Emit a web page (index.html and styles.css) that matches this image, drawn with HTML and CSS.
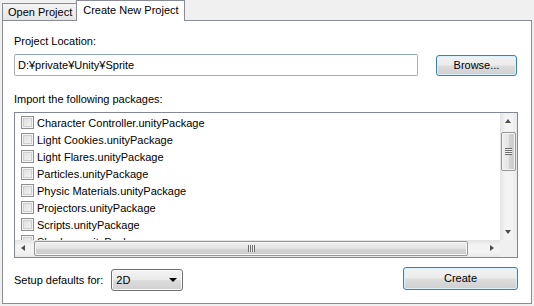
FILE: index.html
```html
<!DOCTYPE html>
<html>
<head>
<meta charset="utf-8">
<link rel="stylesheet" href="styles.css">
</head>
<body>
<div class="window">
  <div class="tabs">
    <div class="tab">Open Project</div>
    <div class="tab active">Create New Project</div>
  </div>
  <div class="panel">
    <div class="label">Project Location:</div>
    <div class="loc-row">
      <div class="input">D:¥private¥Unity¥Sprite</div>
      <div class="btn browse">Browse...</div>
    </div>
    <div class="label label2">Import the following packages:</div>
    <div class="list">
      <div class="items">
        <div class="item"><span class="cb"></span>Character Controller.unityPackage</div>
        <div class="item"><span class="cb"></span>Light Cookies.unityPackage</div>
        <div class="item"><span class="cb"></span>Light Flares.unityPackage</div>
        <div class="item"><span class="cb"></span>Particles.unityPackage</div>
        <div class="item"><span class="cb"></span>Physic Materials.unityPackage</div>
        <div class="item"><span class="cb"></span>Projectors.unityPackage</div>
        <div class="item"><span class="cb"></span>Scripts.unityPackage</div>
        <div class="item"><span class="cb"></span>Shaders.unityPackage</div>
      </div>
      <div class="vscroll">
        <div class="arrow up"></div>
        <div class="vthumb"><span class="grip-h"></span></div>
        <div class="vspace"></div>
        <div class="arrow down"></div>
      </div>
      <div class="hscroll">
        <div class="arrow left"></div>
        <div class="hthumb"><span class="grip-v"></span></div>
        <div class="arrow right"></div>
      </div>
      <div class="corner"></div>
    </div>
    <div class="bottom-row">
      <div class="setup">
        <span>Setup defaults for:</span>
        <div class="select"><span>2D</span><span class="caret"></span></div>
      </div>
      <div class="btn create">Create</div>
    </div>
  </div>
</div>
</body>
</html>
```
FILE: styles.css
```css
html, body {
  margin: 0;
  padding: 0;
}
body {
  background: #f0f0f0;
  font-family: "Liberation Sans", Arial, sans-serif;
  font-size: 11px;
  color: #000;
  width: 534px;
  height: 306px;
  overflow: hidden;
}
.window {
  padding: 0 2px 0 2px;
}
.tabs {
  display: flex;
  align-items: flex-end;
  height: 20px;
}
.tab {
  height: 17px;
  line-height: 17px;
  padding: 0 4px 0 5px;
  border: 1px solid #898c95;
  border-bottom: none;
  background: linear-gradient(#f3f3f3, #e6e6e6);
  box-sizing: border-box;
}
.tab.active {
  height: 21px;
  line-height: 19px;
  margin-bottom: -1px;
  margin-left: -1px;
  padding: 0 5px 0 6px;
  background: #fff;
  position: relative;
  z-index: 1;
}
.panel {
  border: 1px solid #898c95;
  background: #fff;
  height: 284px;
  width: 530px;
  box-sizing: border-box;
  padding: 13px 13px 0 11px;
}
.label {
  height: 14px;
  line-height: 14px;
}
.loc-row {
  display: flex;
  align-items: center;
  margin-top: 6px;
}
.input {
  width: 404px;
  height: 22px;
  box-sizing: border-box;
  border: 1px solid #abadb3;
  border-top-color: #8ea4c1;
  border-radius: 2px;
  line-height: 20px;
  padding-left: 3px;
}
.btn {
  box-sizing: border-box;
  border: 1px solid #3c7fb1;
  border-radius: 3px;
  background: linear-gradient(#f2f2f2 0%, #ebebeb 48%, #dddddd 52%, #cfcfcf 100%);
  box-shadow: inset 0 0 0 1px #d9f2fd;
  text-align: center;
}
.browse {
  width: 81px;
  height: 21px;
  line-height: 19px;
  margin-left: 18px;
}
.label2 {
  margin-top: 16px;
}
.list {
  margin-top: 6px;
  width: 504px;
  height: 146px;
  box-sizing: border-box;
  border: 1px solid #828790;
  display: grid;
  grid-template-columns: 1fr 17px;
  grid-template-rows: 1fr 17px;
}
.items {
  overflow: hidden;
  padding: 1px 0 0 6px;
}
.item {
  height: 17px;
  display: flex;
  align-items: center;
  white-space: nowrap;
}
.cb {
  width: 13px;
  height: 13px;
  box-sizing: border-box;
  border: 1px solid #8e8f8f;
  background: linear-gradient(135deg, #dcdcdc, #f6f6f6);
  box-shadow: inset 0 0 0 1px #f4f4f4, inset 0 0 0 2px #cfcfcf;
  margin-right: 3px;
  flex: none;
}
.vscroll {
  background: linear-gradient(90deg, #e3e3e3, #f3f3f3 30%, #f3f3f3 70%, #e8e8e8);
  display: flex;
  flex-direction: column;
  align-items: center;
}
.arrow {
  width: 17px;
  height: 17px;
  flex: none;
  position: relative;
}
.arrow::after {
  content: "";
  position: absolute;
  width: 0;
  height: 0;
}
.arrow.up::after {
  left: 5px;
  top: 6px;
  border-left: 3px solid transparent;
  border-right: 3px solid transparent;
  border-bottom: 4px solid #4d4d4d;
}
.arrow.down::after {
  left: 5px;
  top: 7px;
  border-left: 3px solid transparent;
  border-right: 3px solid transparent;
  border-top: 4px solid #4d4d4d;
}
.arrow.left::after {
  left: 6px;
  top: 5px;
  border-top: 3px solid transparent;
  border-bottom: 3px solid transparent;
  border-right: 4px solid #4d4d4d;
}
.arrow.right::after {
  left: 7px;
  top: 5px;
  border-top: 3px solid transparent;
  border-bottom: 3px solid transparent;
  border-left: 4px solid #4d4d4d;
}
.vthumb {
  width: 15px;
  height: 39px;
  box-sizing: border-box;
  margin-top: 2px;
  border: 1px solid #979797;
  border-radius: 2px;
  background: linear-gradient(90deg, #f0f0f0, #e4e4e4 50%, #d4d4d4 52%, #cacaca);
  box-shadow: inset 0 0 0 1px #f6f6f6;
  display: flex;
  align-items: center;
  justify-content: center;
}
.grip-h {
  width: 7px;
  height: 7px;
  background: repeating-linear-gradient(#6c6c6c 0 1px, #f0f0f0 1px 2px);
}
.vspace {
  flex: 1;
}
.hscroll {
  background: linear-gradient(#e3e3e3, #f3f3f3 30%, #f3f3f3 70%, #e8e8e8);
  display: flex;
  align-items: center;
}
.hthumb {
  flex: 1;
  height: 15px;
  box-sizing: border-box;
  margin: 0 15px 0 2px;
  border: 1px solid #979797;
  border-radius: 2px;
  background: linear-gradient(#f0f0f0, #e4e4e4 50%, #d4d4d4 52%, #cacaca);
  box-shadow: inset 0 0 0 1px #f6f6f6;
  display: flex;
  align-items: center;
  justify-content: center;
}
.grip-v {
  width: 7px;
  height: 7px;
  background: repeating-linear-gradient(90deg, #6c6c6c 0 1px, #f0f0f0 1px 2px);
}
.corner {
  background: #f0f0f0;
}
.bottom-row {
  display: flex;
  justify-content: space-between;
  align-items: center;
  margin-top: 11px;
}
.setup {
  display: flex;
  align-items: center;
}
.select {
  margin-left: 8px;
  width: 72px;
  height: 22px;
  box-sizing: border-box;
  border: 1px solid #707070;
  border-radius: 3px;
  background: linear-gradient(#f2f2f2, #ebebeb 48%, #dddddd 52%, #cfcfcf);
  box-shadow: inset 0 0 0 1px #fbfbfb;
  display: flex;
  align-items: center;
  justify-content: space-between;
  padding: 0 5px 0 4px;
}
.caret {
  width: 0;
  height: 0;
  border-left: 4px solid transparent;
  border-right: 4px solid transparent;
  border-top: 4px solid #000;
}
.create {
  width: 115px;
  height: 23px;
  line-height: 21px;
  margin-top: -4px;
}
```
